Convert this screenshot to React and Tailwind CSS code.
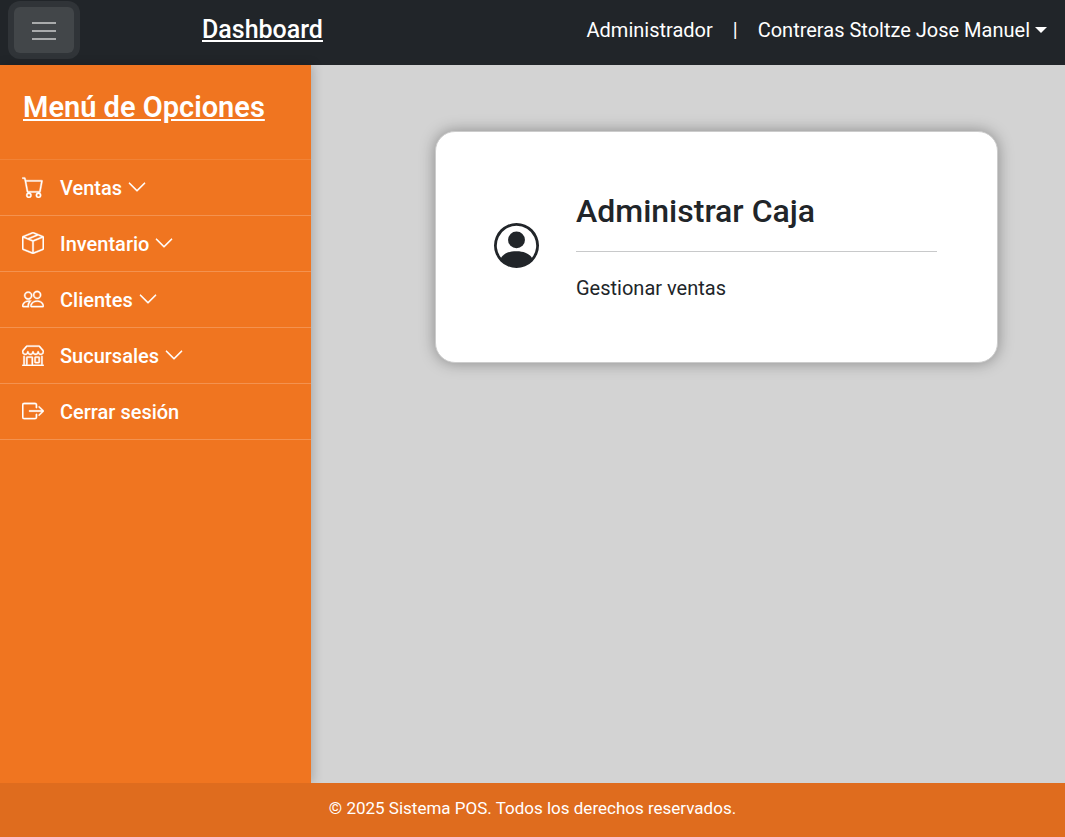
import React from "react";
import {
  BsBoxArrowRight,
  BsBoxSeam,
  BsCart,
  BsChevronDown,
  BsPeople,
  BsPersonCircle,
  BsShop,
} from "react-icons/bs";

const menu = [
  { label: "Ventas", Icon: BsCart, expands: true },
  { label: "Inventario", Icon: BsBoxSeam, expands: true },
  { label: "Clientes", Icon: BsPeople, expands: true },
  { label: "Sucursales", Icon: BsShop, expands: true },
  { label: "Cerrar sesión", Icon: BsBoxArrowRight, expands: false },
];

function Header() {
  return (
    <header className="flex h-[65px] items-center bg-[#212529] pr-[18px] pb-[5px] pl-[14px] text-xl text-white">
      <button
        type="button"
        aria-label="Abrir menú"
        className="flex h-[46px] w-[60px] items-center justify-center rounded-md bg-[#424649] ring-6 ring-[#303438]"
      >
        <svg viewBox="0 0 24 20" className="h-5 w-6" stroke="#a9abac" strokeWidth="2">
          <path d="M0 3h24M0 11h24M0 19h24" />
        </svg>
      </button>
      <a href="#dashboard" className="ml-32 text-[25px] leading-8 font-medium underline">
        Dashboard
      </a>
      <div className="ml-auto flex items-center gap-5">
        <span>Administrador</span>
        <span>|</span>
        <button type="button" className="flex items-center gap-[5px]">
          Contreras Stoltze Jose Manuel
          <svg viewBox="0 0 12 6" className="h-[6px] w-3" fill="currentColor">
            <path d="M0 0h12L6 6z" />
          </svg>
        </button>
      </div>
    </header>
  );
}

function Sidebar() {
  return (
    <aside className="w-[311px] shrink-0 bg-[#f07520] text-white shadow-[2px_0_10px_rgba(0,0,0,0.2)]">
      <h2 className="border-b border-[#f28336] px-[23px] pt-5 pb-[30px] text-[29px] leading-[44px] font-semibold underline">
        Menú de Opciones
      </h2>
      <nav>
        <ul>
          {menu.map(({ label, Icon, expands }) => (
            <li key={label} className="border-b border-[#f4924f]">
              <a href="#menu" className="flex h-[55px] items-center px-[22px] text-xl font-medium">
                <Icon className="mr-4 mb-[2px] size-[22px]" strokeWidth={0.25} />
                {label}
                {expands && <BsChevronDown className="mb-[2px] ml-[5px] size-5" strokeWidth={0.25} />}
              </a>
            </li>
          ))}
        </ul>
      </nav>
    </aside>
  );
}

export default function App() {
  return (
    <div className="flex min-h-screen flex-col bg-[#d3d3d3] font-['Roboto',sans-serif] text-[#212529]">
      <Header />
      <div className="flex flex-1">
        <Sidebar />
        <main className="flex-1 pt-[66px] pr-[67px] pb-8 pl-[124px]">
          <a
            href="#caja"
            className="flex items-center gap-[37px] rounded-[20px] border border-[#cccccc] bg-white pt-[54px] pr-[60px] pb-[54px] pl-[58px] shadow-[0_0_15px_rgba(0,0,0,0.35)]"
          >
            <BsPersonCircle className="mb-1 size-[45px] shrink-0" />
            <div className="flex-1">
              <h1 className="text-[32px] leading-[50px] font-medium">Administrar Caja</h1>
              <hr className="mt-[15px] mb-4 border-[#c8c9ca]" />
              <p className="text-xl leading-10">Gestionar ventas</p>
            </div>
          </a>
        </main>
      </div>
      <footer className="bg-[#df6c1e] px-4 pt-3 pb-[15px] text-center text-[17px] leading-[27px] text-white">
        © 2025 Sistema POS. Todos los derechos reservados.
      </footer>
    </div>
  );
}
